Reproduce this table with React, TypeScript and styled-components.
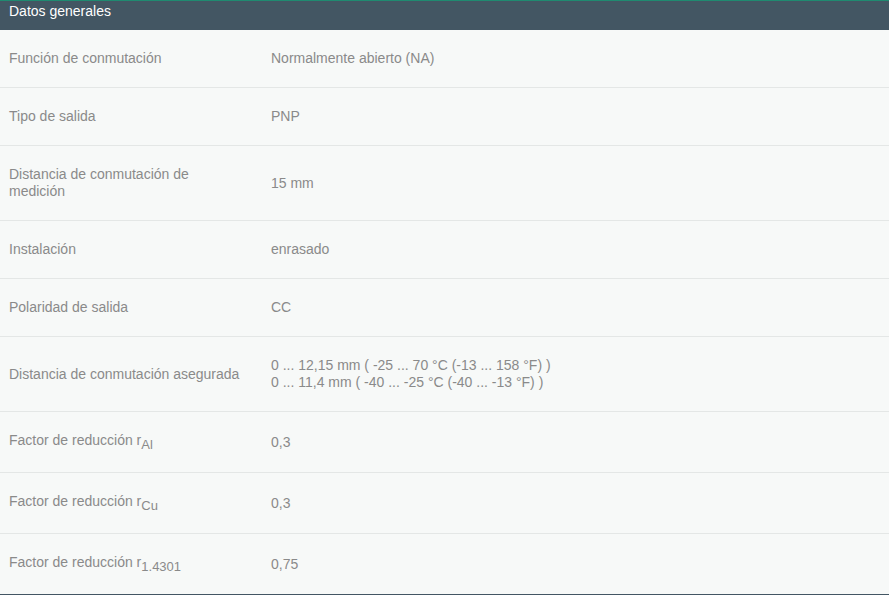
import React from 'react';
import styled, { createGlobalStyle } from 'styled-components';

const GlobalStyle = createGlobalStyle`
  html, body {
    margin: 0;
    padding: 0;
    background: #f7f9f8;
  }
  body {
    font-family: "Liberation Sans", Arial, sans-serif;
  }
`;

const Panel = styled.section`
  width: 889px;
  background: #f7f9f8;
  border-bottom: 2px solid #435663;
`;

const Header = styled.h2`
  margin: 0;
  padding: 2px 9px 0;
  height: 27px;
  border-top: 1px solid #1f8a70;
  background: #435663;
  color: #ffffff;
  font-size: 14px;
  font-weight: normal;
  line-height: 17px;
`;

const Table = styled.table`
  width: 100%;
  border-collapse: collapse;
  table-layout: fixed;
`;

const Row = styled.tr`
  border-bottom: 1px solid #e4e7e6;
  &:last-child {
    border-bottom: none;
  }
`;

const Label = styled.td`
  width: 236px;
  padding: 20px 17px 20px 9px;
  vertical-align: middle;
  color: #8a8a8a;
  font-size: 14px;
  line-height: 17px;
`;

const Value = styled.td`
  padding: 20px 9px;
  vertical-align: middle;
  color: #8a8a8a;
  font-size: 14px;
  line-height: 17px;
`;

const Sub = styled.sub`
  font-size: 13px;
  line-height: 14px;
  vertical-align: -4px;
`;

const Line = styled.div``;

type Item = { label: React.ReactNode; value: React.ReactNode };

const items: Item[] = [
  { label: 'Función de conmutación', value: 'Normalmente abierto (NA)' },
  { label: 'Tipo de salida', value: 'PNP' },
  { label: 'Distancia de conmutación de medición', value: '15 mm' },
  { label: 'Instalación', value: 'enrasado' },
  { label: 'Polaridad de salida', value: 'CC' },
  {
    label: 'Distancia de conmutación asegurada',
    value: (
      <>
        <Line>0 ... 12,15 mm ( -25 ... 70 °C (-13 ... 158 °F) )</Line>
        <Line>0 ... 11,4 mm ( -40 ... -25 °C (-40 ... -13 °F) )</Line>
      </>
    ),
  },
  { label: <>Factor de reducción r<Sub>Al</Sub></>, value: '0,3' },
  { label: <>Factor de reducción r<Sub>Cu</Sub></>, value: '0,3' },
  { label: <>Factor de reducción r<Sub>1.4301</Sub></>, value: '0,75' },
];

export default function App() {
  return (
    <>
      <GlobalStyle />
      <Panel>
        <Header>Datos generales</Header>
        <Table>
          <tbody>
            {items.map((item, i) => (
              <Row key={i}>
                <Label>{item.label}</Label>
                <Value>{item.value}</Value>
              </Row>
            ))}
          </tbody>
        </Table>
      </Panel>
    </>
  );
}
